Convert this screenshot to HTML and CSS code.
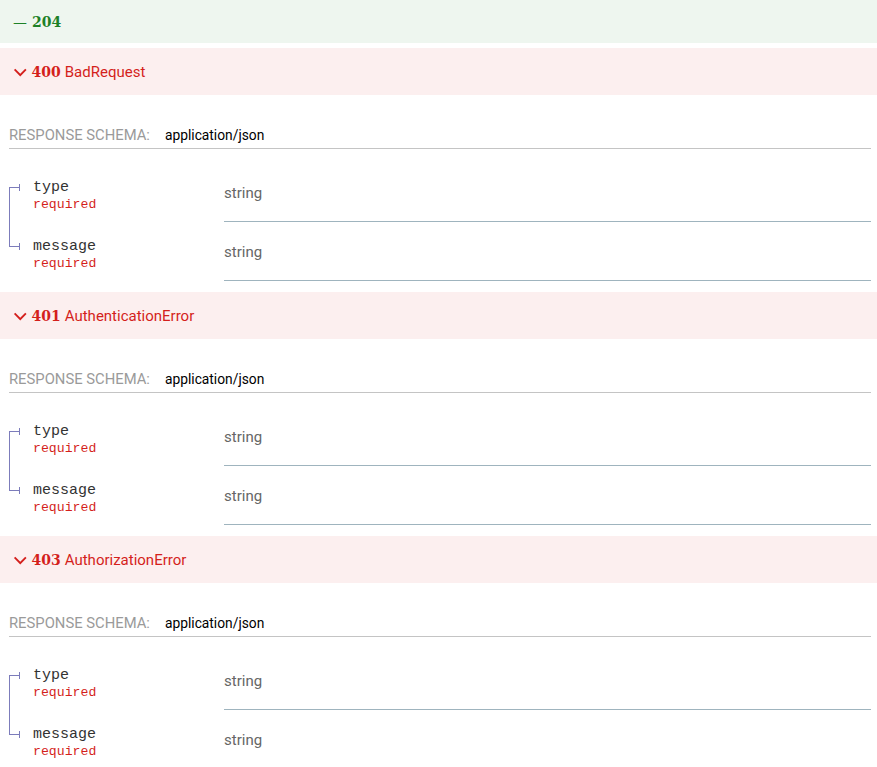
FILE: index.html
```html
<!DOCTYPE html>
<html lang="en">
<head>
<meta charset="utf-8">
<title>Responses</title>
<link rel="stylesheet" href="styles.css">
</head>
<body>
<div class="responses">
  <div class="resp-btn success">
    <span class="dash">—</span><strong class="code">204</strong>
  </div>

  <section class="resp">
    <div class="resp-btn error">
      <svg class="shelf" viewBox="0 0 24 24"><polygon points="17.3 8.3 12 13.6 6.7 8.3 5.3 9.7 12 16.4 18.7 9.7"/></svg>
      <strong class="code">400</strong><span class="title">BadRequest</span>
    </div>
    <div class="resp-body">
      <div class="media"><span class="media-label">Response Schema:</span><span class="media-type">application/json</span></div>
      <div class="props">
        <div class="prop first">
          <div class="name-cell">
            <div class="name-line"><span class="bullet"></span><span class="prop-name">type</span></div>
            <div class="req">required</div>
          </div>
          <div class="type-cell">string</div>
        </div>
        <div class="prop last">
          <div class="name-cell">
            <div class="name-line"><span class="bullet"></span><span class="prop-name">message</span></div>
            <div class="req">required</div>
          </div>
          <div class="type-cell">string</div>
        </div>
      </div>
    </div>
  </section>

  <section class="resp">
    <div class="resp-btn error">
      <svg class="shelf" viewBox="0 0 24 24"><polygon points="17.3 8.3 12 13.6 6.7 8.3 5.3 9.7 12 16.4 18.7 9.7"/></svg>
      <strong class="code">401</strong><span class="title">AuthenticationError</span>
    </div>
    <div class="resp-body">
      <div class="media"><span class="media-label">Response Schema:</span><span class="media-type">application/json</span></div>
      <div class="props">
        <div class="prop first">
          <div class="name-cell">
            <div class="name-line"><span class="bullet"></span><span class="prop-name">type</span></div>
            <div class="req">required</div>
          </div>
          <div class="type-cell">string</div>
        </div>
        <div class="prop last">
          <div class="name-cell">
            <div class="name-line"><span class="bullet"></span><span class="prop-name">message</span></div>
            <div class="req">required</div>
          </div>
          <div class="type-cell">string</div>
        </div>
      </div>
    </div>
  </section>

  <section class="resp">
    <div class="resp-btn error">
      <svg class="shelf" viewBox="0 0 24 24"><polygon points="17.3 8.3 12 13.6 6.7 8.3 5.3 9.7 12 16.4 18.7 9.7"/></svg>
      <strong class="code">403</strong><span class="title">AuthorizationError</span>
    </div>
    <div class="resp-body">
      <div class="media"><span class="media-label">Response Schema:</span><span class="media-type">application/json</span></div>
      <div class="props">
        <div class="prop first">
          <div class="name-cell">
            <div class="name-line"><span class="bullet"></span><span class="prop-name">type</span></div>
            <div class="req">required</div>
          </div>
          <div class="type-cell">string</div>
        </div>
        <div class="prop last">
          <div class="name-cell">
            <div class="name-line"><span class="bullet"></span><span class="prop-name">message</span></div>
            <div class="req">required</div>
          </div>
          <div class="type-cell">string</div>
        </div>
      </div>
    </div>
  </section>
</div>
</body>
</html>
```

FILE: styles.css
```css
html {
  overflow: hidden;
}

body {
  margin: 0;
  background: #ffffff;
  font-family: Roboto, "Liberation Sans", sans-serif;
  color: #333333;
}

.responses {
  width: 877px;
}

.resp-btn {
  display: flex;
  align-items: center;
  box-sizing: border-box;
  height: 47px;
  padding: 0 9px;
}

.resp-btn.success {
  height: 43px;
  margin-bottom: 5px;
  padding-left: 13px;
  background: #eef6ef;
  color: #1d8127;
}

.resp-btn.error {
  background: #fcefef;
  color: #d41f1c;
}

.dash {
  font-family: "DejaVu Sans", sans-serif;
  font-size: 14px;
  line-height: 20px;
  margin-right: 5px;
}

.shelf {
  width: 22.5px;
  height: 22.5px;
  flex: none;
  fill: currentColor;
  margin-top: 1px;
}

.code {
  font-family: "DejaVu Serif", serif;
  font-weight: bold;
  font-size: 14px;
  line-height: 20px;
  margin-right: 4px;
}

.title {
  font-size: 15px;
  line-height: 20px;
}

.resp-body {
  padding: 30px 6px 11px 9px;
}

.media {
  display: flex;
  align-items: baseline;
  line-height: 20px;
  padding-bottom: 3px;
  border-bottom: 1px solid #c4c4c4;
  font-size: 14px;
}

.media-label {
  text-transform: uppercase;
  font-size: 14.8px;
  color: #9a9a9a;
  margin-right: 15px;
}

.media-type {
  color: #000000;
  font-size: 13.8px;
}

.props {
  margin-top: 14px;
}

.prop {
  display: grid;
  grid-template-columns: 215px 1fr;
}

.prop.first .name-cell {
  background: linear-gradient(#7c7cbb, #7c7cbb) 0 24px / 1px 100% no-repeat;
}

.prop.last .name-cell {
  background: linear-gradient(#7c7cbb, #7c7cbb) 0 0 / 1px 25px no-repeat;
}

.name-cell {
  padding-top: 15px;
}

.name-line {
  display: flex;
  align-items: center;
  height: 18px;
}

.bullet {
  display: flex;
  align-items: center;
  flex: none;
  width: 11px;
  height: 7px;
}

.bullet::before {
  content: "";
  width: 10px;
  height: 1px;
  background: #7c7cbb;
}

.bullet::after {
  content: "";
  width: 1px;
  height: 7px;
  background: #7c7cbb;
}

.prop-name {
  margin-left: 13px;
  font-family: "Liberation Mono", "Courier New", monospace;
  font-size: 15px;
  color: #333333;
}

.req {
  padding-left: 24px;
  font-family: "Liberation Mono", "Courier New", monospace;
  font-size: 13.2px;
  line-height: 17px;
  color: #d41f1c;
}

.type-cell {
  padding: 20px 0 18px 0;
  line-height: 20px;
  font-size: 15px;
  color: #666666;
  border-bottom: 1px solid #9fb4be;
}
```
